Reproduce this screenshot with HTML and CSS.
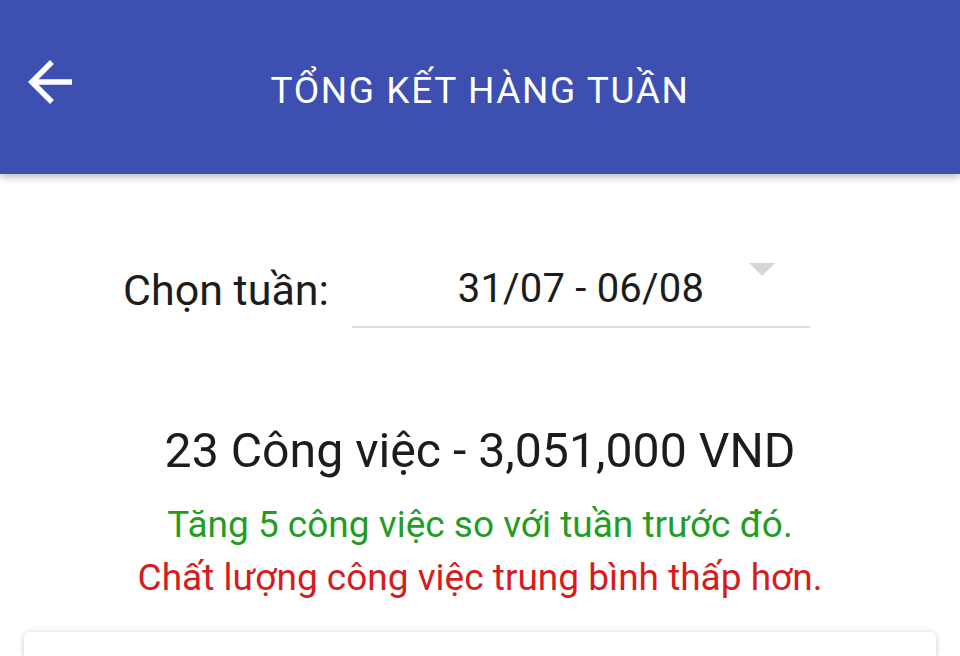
FILE: index.html
```html
<!DOCTYPE html>
<html lang="vi">
<head>
<meta charset="utf-8">
<link rel="stylesheet" href="styles.css">
</head>
<body>
<header class="appbar">
  <div class="appbar-left">
    <svg class="back" viewBox="0 0 24 24" width="66" height="66"><path fill="#fff" d="M20 11H7.83l5.59-5.59L12 4l-8 8 8 8 1.41-1.41L7.83 13H20v-2z"/></svg>
  </div>
  <h1 class="title">TỔNG KẾT HÀNG TUẦN</h1>
  <div class="appbar-right"></div>
</header>
<main class="content">
  <div class="week-row">
    <span class="week-label">Chọn tuần:</span>
    <div class="week-select">
      <span class="week-value">31/07 - 06/08</span>
      <span class="caret"></span>
    </div>
  </div>
  <div class="summary">
    <p class="summary-total">23 Công việc - 3,051,000 VND</p>
    <p class="summary-up">Tăng 5 công việc so với tuần trước đó.</p>
    <p class="summary-down">Chất lượng công việc trung bình thấp hơn.</p>
  </div>
  <div class="card"></div>
</main>
</body>
</html>
```
FILE: styles.css
```css
html, body {
  margin: 0;
  padding: 0;
  background: #ffffff;
  font-family: Roboto, "Noto Sans", "Liberation Sans", sans-serif;
  color: #212121;
  overflow: hidden;
}
body {
  height: 656px;
  display: flex;
  flex-direction: column;
}
.appbar {
  flex: none;
  height: 174px;
  background: #3d4fb1;
  display: grid;
  grid-template-columns: 1fr auto 1fr;
  align-items: center;
  box-shadow: 0 3px 8px rgba(0,0,0,0.28);
  position: relative;
  z-index: 1;
}
.appbar-left {
  padding-left: 17px;
  display: flex;
  align-items: center;
  margin-top: -10px;
}
.back { display: block; }
.title {
  margin: 6px 0 0;
  color: #ffffff;
  font-weight: 400;
  font-size: 37px;
  letter-spacing: 1.6px;
}
.content {
  flex: 1;
  min-height: 0;
  display: flex;
  flex-direction: column;
}
.week-row {
  display: flex;
  align-items: flex-end;
  margin-top: 87px;
  padding-left: 123px;
}
.week-label {
  font-size: 43px;
  line-height: 48px;
  padding-bottom: 14px;
  color: #1c1c1c;
}
.week-select {
  position: relative;
  margin-left: 23px;
  width: 458px;
  height: 65px;
  border-bottom: 2px solid #dedede;
  display: flex;
  justify-content: center;
  align-items: flex-end;
}
.week-value {
  font-size: 40px;
  line-height: 48px;
  padding-bottom: 13px;
  color: #1c1c1c;
  letter-spacing: 0.2px;
}
.caret {
  position: absolute;
  right: 35px;
  top: 2px;
  width: 0;
  height: 0;
  border-left: 13px solid transparent;
  border-right: 13px solid transparent;
  border-top: 13px solid #d6d6d6;
}
.summary {
  margin-top: 93px;
  text-align: center;
}
.summary p { margin: 0; }
.summary-total {
  font-size: 48.2px;
  line-height: 60px;
  color: #1c1c1c;
}
.summary-up {
  margin-top: 17px !important;
  font-size: 37px;
  line-height: 53px;
  color: #1f9d24;
}
.summary-down {
  font-size: 37px;
  line-height: 53px;
  color: #d61c1c;
}
.card {
  flex: 1;
  margin: 28px 24px 0;
  background: #ffffff;
  border-radius: 6px 6px 0 0;
  box-shadow: 0 1px 6px rgba(0,0,0,0.22);
}
```
